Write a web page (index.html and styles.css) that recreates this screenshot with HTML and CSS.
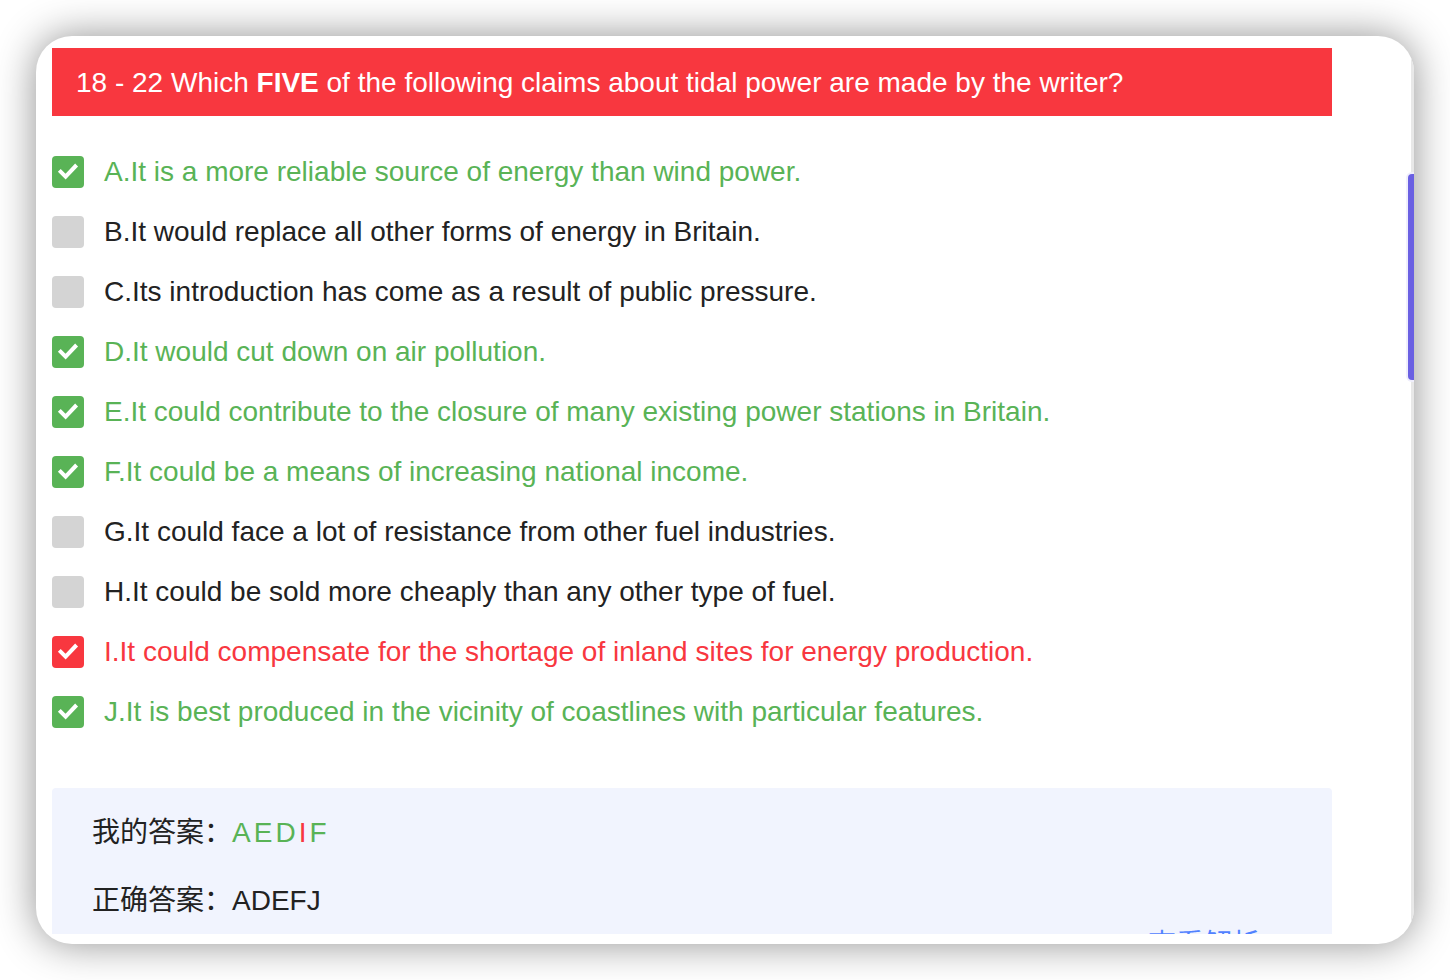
FILE: index.html
```html
<!DOCTYPE html>
<html lang="en">
<head>
<meta charset="utf-8">
<title>Reading questions 18 - 22</title>
<link rel="stylesheet" href="styles.css">
</head>
<body>
<svg class="symbols" aria-hidden="true"><symbol id="tick" viewBox="0 0 32 32"><path d="M7.3 14.3 13.6 20.6 24.6 9" fill="none" stroke="#fff" stroke-width="4"/></symbol></svg>
<main class="card">
  <div class="content">
    <h1 class="question">18 - 22 Which <strong>FIVE</strong> of the following claims about tidal power are made by the writer?</h1>
    <div class="options">
      <label class="option correct"><span class="box"><input type="checkbox" checked><svg class="tick" aria-hidden="true"><use href="#tick"/></svg></span>A.It is a more reliable source of energy than wind power.</label>
      <label class="option"><span class="box"><input type="checkbox"></span>B.It would replace all other forms of energy in Britain.</label>
      <label class="option"><span class="box"><input type="checkbox"></span>C.Its introduction has come as a result of public pressure.</label>
      <label class="option correct"><span class="box"><input type="checkbox" checked><svg class="tick" aria-hidden="true"><use href="#tick"/></svg></span>D.It would cut down on air pollution.</label>
      <label class="option correct"><span class="box"><input type="checkbox" checked><svg class="tick" aria-hidden="true"><use href="#tick"/></svg></span>E.It could contribute to the closure of many existing power stations in Britain.</label>
      <label class="option correct"><span class="box"><input type="checkbox" checked><svg class="tick" aria-hidden="true"><use href="#tick"/></svg></span>F.It could be a means of increasing national income.</label>
      <label class="option"><span class="box"><input type="checkbox"></span>G.It could face a lot of resistance from other fuel industries.</label>
      <label class="option"><span class="box"><input type="checkbox"></span>H.It could be sold more cheaply than any other type of fuel.</label>
      <label class="option wrong"><span class="box"><input type="checkbox" checked><svg class="tick" aria-hidden="true"><use href="#tick"/></svg></span>I.It could compensate for the shortage of inland sites for energy production.</label>
      <label class="option correct"><span class="box"><input type="checkbox" checked><svg class="tick" aria-hidden="true"><use href="#tick"/></svg></span>J.It is best produced in the vicinity of coastlines with particular features.</label>
    </div>
    <section class="answers">
      <div class="answer"><span lang="zh-CN">我的答案：</span><span class="letters"><span class="correct">A</span><span class="correct">E</span><span class="correct">D</span><span class="wrong">I</span><span class="correct">F</span></span></div>
      <div class="answer"><span lang="zh-CN">正确答案：</span><span>ADEFJ</span></div>
      <a class="explain" href="#explain" lang="zh-CN">查看解析</a>
    </section>
  </div>
  <div class="track"></div>
  <div class="thumb"></div>
</main>
</body>
</html>
```
FILE: styles.css
```css
* {
  box-sizing: border-box;
}

body {
  margin: 0;
  padding: 36px;
  height: 100vh;
  overflow: hidden;
  background: #fff;
  color: #222;
  font: 28px/40px "Liberation Sans", "Noto Sans CJK SC", sans-serif;
}

.symbols {
  position: absolute;
  width: 0;
  height: 0;
}

.card {
  position: relative;
  display: flex;
  height: 100%;
  padding: 12px 82px 10px 16px;
  overflow: hidden;
  border-radius: 36px;
  background: #fff;
  box-shadow: 0 0 40px rgba(0, 0, 0, 0.44);
}

.content {
  flex: 1;
  min-width: 0;
  overflow: hidden;
}

.question {
  margin: 0;
  padding: 15px 24px 13px;
  background: #f8373f;
  color: #fff;
  font-size: 28px;
  font-weight: 400;
}

.options {
  display: flex;
  flex-direction: column;
  gap: 20px;
  padding: 36px 0 56px;
}

.option {
  display: flex;
  align-items: center;
  gap: 20px;
}

.correct {
  color: #59b356;
}

.wrong {
  color: #f8373f;
}

.box {
  display: grid;
  flex: none;
}

.box input {
  grid-area: 1 / 1;
  appearance: none;
  width: 32px;
  height: 32px;
  margin: 0;
  border-radius: 4px;
  background: #d4d4d4;
  color: inherit;
}

.box input:checked {
  background: currentColor;
}

.tick {
  grid-area: 1 / 1;
  width: 32px;
  height: 32px;
  pointer-events: none;
}

.answers {
  display: flex;
  flex-direction: column;
  padding: 25px 72px 24px 40px;
  border-radius: 4px;
  background: #f1f4fe;
}

.answer {
  display: flex;
  margin-bottom: 28px;
}

.answer + .answer {
  margin-bottom: 4px;
}

.letters {
  display: flex;
  gap: 3px;
}

.explain {
  align-self: flex-end;
  color: #5182ff;
  text-decoration: none;
}

.track,
.thumb {
  position: absolute;
  right: 0;
}

.track {
  top: 0;
  bottom: 0;
  width: 3px;
  background: #e8e8e8;
}

.thumb {
  top: 138px;
  width: 6px;
  height: 206px;
  border-radius: 4px 0 0 4px;
  background: #6a60e2;
  box-shadow: 0 0 0 2px #efeefc;
}
```
